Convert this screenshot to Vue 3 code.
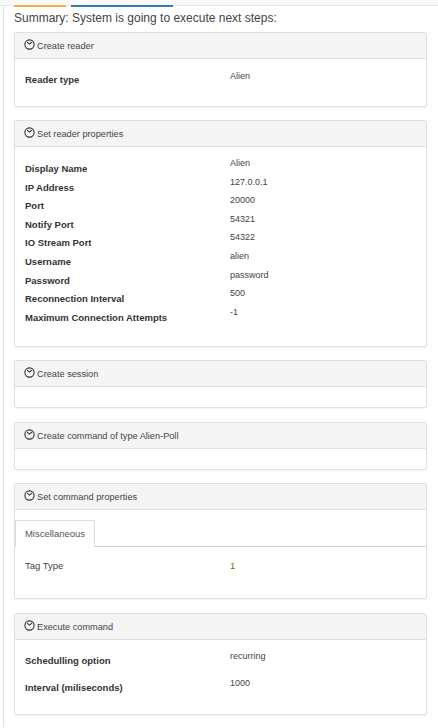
<script setup>
const readerProps = [
  ["Display Name", "Alien"],
  ["IP Address", "127.0.0.1"],
  ["Port", "20000"],
  ["Notify Port", "54321"],
  ["IO Stream Port", "54322"],
  ["Username", "alien"],
  ["Password", "password"],
  ["Reconnection Interval", "500"],
  ["Maximum Connection Attempts", "-1"],
];
</script>

<template>
  <div class="page">
    <div class="top-bar"></div>
    <div class="content">
      <div class="progress">
        <span class="bar orange"></span>
        <span class="bar blue"></span>
      </div>
      <h4 class="summary">Summary: System is going to execute next steps:</h4>

      <section class="panel">
        <header class="panel-head"><svg class="clock" viewBox="0 0 10 10"><circle cx="5" cy="5" r="4.2" /><path d="M2.8 2.8L5 4.6L7.4 2.6" /></svg>Create reader</header>
        <div class="panel-body one">
          <div class="row"><b class="label">Reader type</b><span class="value">Alien</span></div>
        </div>
      </section>

      <section class="panel">
        <header class="panel-head"><svg class="clock" viewBox="0 0 10 10"><circle cx="5" cy="5" r="4.2" /><path d="M2.8 2.8L5 4.6L7.4 2.6" /></svg>Set reader properties</header>
        <div class="panel-body props">
          <div v-for="p in readerProps" :key="p[0]" class="row prop">
            <b class="label">{{ p[0] }}</b><span class="value">{{ p[1] }}</span>
          </div>
        </div>
      </section>

      <section class="panel wide-gap">
        <header class="panel-head"><svg class="clock" viewBox="0 0 10 10"><circle cx="5" cy="5" r="4.2" /><path d="M2.8 2.8L5 4.6L7.4 2.6" /></svg>Create session</header>
        <div class="panel-body empty"></div>
      </section>

      <section class="panel">
        <header class="panel-head"><svg class="clock" viewBox="0 0 10 10"><circle cx="5" cy="5" r="4.2" /><path d="M2.8 2.8L5 4.6L7.4 2.6" /></svg>Create command of type Alien-Poll</header>
        <div class="panel-body empty"></div>
      </section>

      <section class="panel wide-gap">
        <header class="panel-head"><svg class="clock" viewBox="0 0 10 10"><circle cx="5" cy="5" r="4.2" /><path d="M2.8 2.8L5 4.6L7.4 2.6" /></svg>Set command properties</header>
        <div class="panel-body tabbed">
          <div class="tabs"><span class="tab">Miscellaneous</span></div>
          <div class="tab-row"><span class="tag-label">Tag Type</span><span class="tag-value">1</span></div>
        </div>
      </section>

      <section class="panel">
        <header class="panel-head"><svg class="clock" viewBox="0 0 10 10"><circle cx="5" cy="5" r="4.2" /><path d="M2.8 2.8L5 4.6L7.4 2.6" /></svg>Execute command</header>
        <div class="panel-body exec">
          <div class="row exec-row"><b class="label">Schedulling option</b><span class="value">recurring</span></div>
          <div class="row exec-row"><b class="label">Interval (miliseconds)</b><span class="value">1000</span></div>
        </div>
      </section>
    </div>
  </div>
</template>

<style scoped>
.page {
  height: 728px;
  overflow: hidden;
  background: #fff;
  font-family: "Liberation Sans", Arial, sans-serif;
  color: #333;
}
.top-bar {
  height: 5px;
  background: #f8f8f8;
  border-bottom: 1px solid #e7e7e7;
}
.content {
  margin-left: 3px;
  border-left: 1px solid #e0e0e0;
  padding: 0 11px 0 10px;
  height: 722px;
}
.progress {
  display: flex;
  gap: 5px;
  height: 2px;
  margin-top: -1px;
}
.bar {
  height: 2px;
}
.orange {
  width: 52px;
  background: #f0ad4e;
}
.blue {
  width: 102px;
  background: #337ab7;
}
.summary {
  margin: 0;
  padding-top: 4px;
  height: 25px;
  box-sizing: border-box;
  font-size: 12px;
  font-weight: 400;
  line-height: 15px;
  color: #444;
}
.panel {
  border: 1px solid #e0e0e0;
  border-radius: 2px;
  margin-bottom: 13px;
  box-shadow: 0 1px 1px rgba(0, 0, 0, 0.05);
}
.panel.wide-gap {
  margin-bottom: 14px;
}
.panel-head {
  height: 26px;
  box-sizing: border-box;
  background: #f4f4f4;
  border-bottom: 1px solid #e0e0e0;
  padding: 0 9px;
  display: flex;
  align-items: center;
  font-size: 9.2px;
  color: #444;
}
.clock {
  width: 11px;
  height: 11px;
  margin-right: 2px;
  margin-top: -2px;
  fill: none;
  stroke: #333;
  stroke-width: 1;
}
.row {
  display: flex;
}
.label {
  width: 205px;
  font-size: 9.5px;
  color: #333;
  padding-top: 4px;
}
.value {
  font-size: 9px;
  color: #444;
}
.panel-body.one {
  height: 47px;
  padding: 12px 10px 0;
  box-sizing: border-box;
}
.one .label {
  padding-top: 3px;
}
.panel-body.props {
  height: 199px;
  padding: 10px 10px 0;
  box-sizing: border-box;
}
.row.prop {
  height: 18.6px;
  line-height: 12px;
}
.prop .label {
  padding-top: 6px;
}
.panel-body.empty {
  height: 20px;
}
.panel-body.tabbed {
  height: 88px;
  padding-top: 10px;
  box-sizing: border-box;
}
.tabs {
  height: 27px;
  border-bottom: 1px solid #ccc;
  box-sizing: border-box;
}
.tab {
  display: inline-block;
  height: 27px;
  width: 80px;
  box-sizing: border-box;
  background: #fff;
  border: 1px solid #ddd;
  border-bottom: none;
  text-align: center;
  line-height: 26px;
  font-size: 9.5px;
  color: #555;
}
.tab-row {
  display: flex;
  padding: 13px 10px 0;
  font-size: 9.5px;
  color: #444;
}
.tag-label {
  width: 205px;
}
.tag-value {
  color: #8a5a2b;
}
.panel-body.exec {
  height: 74px;
  padding: 11px 10px 0;
  box-sizing: border-box;
}
.row.exec-row {
  height: 26.5px;
}
</style>

<style>
html, body {
  margin: 0;
  background: #fff;
}
</style>
